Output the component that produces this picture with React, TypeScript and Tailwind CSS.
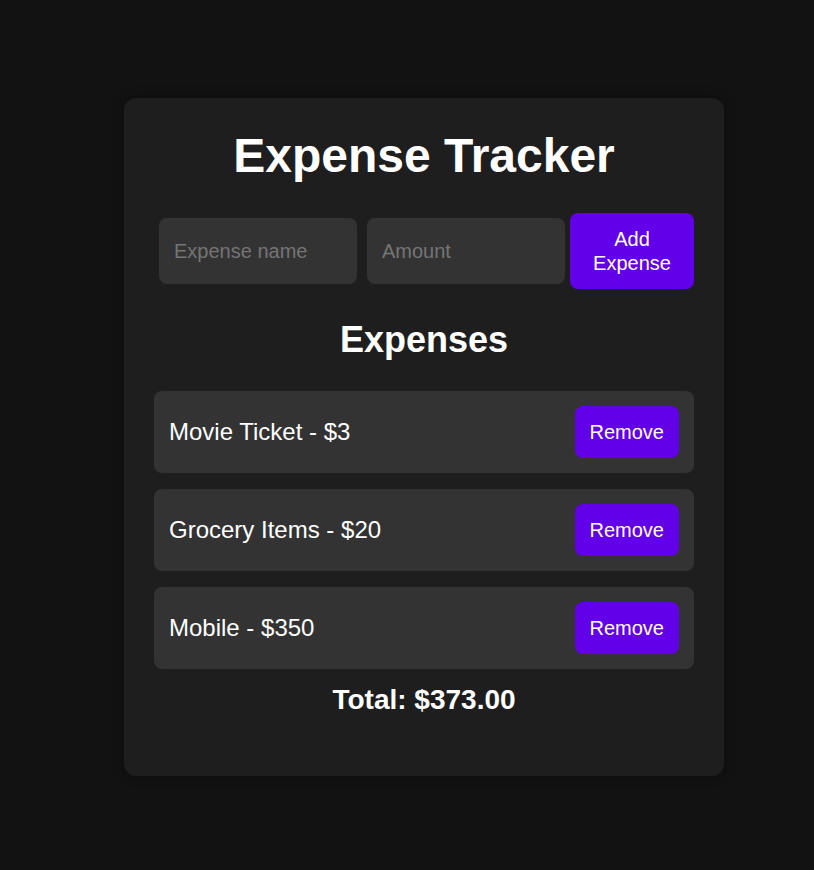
import { useState } from 'react';

interface Expense {
  id: number;
  name: string;
  amount: number;
}

const initialExpenses: Expense[] = [
  { id: 1, name: 'Movie Ticket', amount: 3 },
  { id: 2, name: 'Grocery Items', amount: 20 },
  { id: 3, name: 'Mobile', amount: 350 },
];

export default function App() {
  const [expenses, setExpenses] = useState<Expense[]>(initialExpenses);
  const [name, setName] = useState('');
  const [amount, setAmount] = useState('');

  const total = expenses.reduce((sum, e) => sum + e.amount, 0);

  function handleAdd() {
    const value = parseFloat(amount);
    if (!name.trim() || isNaN(value)) return;
    setExpenses([...expenses, { id: Date.now(), name: name.trim(), amount: value }]);
    setName('');
    setAmount('');
  }

  function handleRemove(id: number) {
    setExpenses(expenses.filter((e) => e.id !== id));
  }

  return (
    <div className="min-h-screen bg-[#121212] pt-[98px] pl-[124px] font-['Liberation_Sans',Arial,sans-serif] text-white">
      <div className="w-[600px] rounded-xl bg-[#1e1e1e] p-[30px] shadow-[0_0_12px_rgba(0,0,0,0.35)]">
        <h1 className="text-center text-[48px] font-bold leading-[55px] mb-[30px]">Expense Tracker</h1>

        {/* ─── Add form ─── */}
        <div className="flex items-stretch">
          <input
            type="text"
            value={name}
            onChange={(e) => setName(e.target.value)}
            placeholder="Expense name"
            className="m-[5px] w-0 flex-1 rounded-lg bg-[#333333] px-[15px] text-[20px] text-white placeholder:text-[#757575] outline-none"
          />
          <input
            type="text"
            value={amount}
            onChange={(e) => setAmount(e.target.value)}
            placeholder="Amount"
            className="m-[5px] w-0 flex-1 rounded-lg bg-[#333333] px-[15px] text-[20px] text-white placeholder:text-[#757575] outline-none"
          />
          <button
            onClick={handleAdd}
            className="w-[124px] shrink-0 rounded-lg bg-[#6200ea] px-[20px] py-[14px] text-[20px] leading-[24px] text-white"
          >
            Add Expense
          </button>
        </div>

        <h2 className="mt-[30px] mb-[30px] text-center text-[36px] font-bold leading-[42px]">Expenses</h2>

        {/* ─── List ─── */}
        <ul className="flex flex-col gap-4">
          {expenses.map((e) => (
            <li
              key={e.id}
              className="flex h-[82px] items-center justify-between rounded-lg bg-[#333333] px-[15px]"
            >
              <span className="text-[24px] leading-[28px]">
                {e.name} - ${e.amount}
              </span>
              <button
                onClick={() => handleRemove(e.id)}
                className="h-[52px] rounded-lg bg-[#6200ea] px-[15px] text-[20px] leading-[24px] text-white"
              >
                Remove
              </button>
            </li>
          ))}
        </ul>

        <p className="mt-[15px] mb-[30px] text-center text-[28px] font-bold leading-[32px]">
          Total: ${total.toFixed(2)}
        </p>
      </div>
    </div>
  );
}
